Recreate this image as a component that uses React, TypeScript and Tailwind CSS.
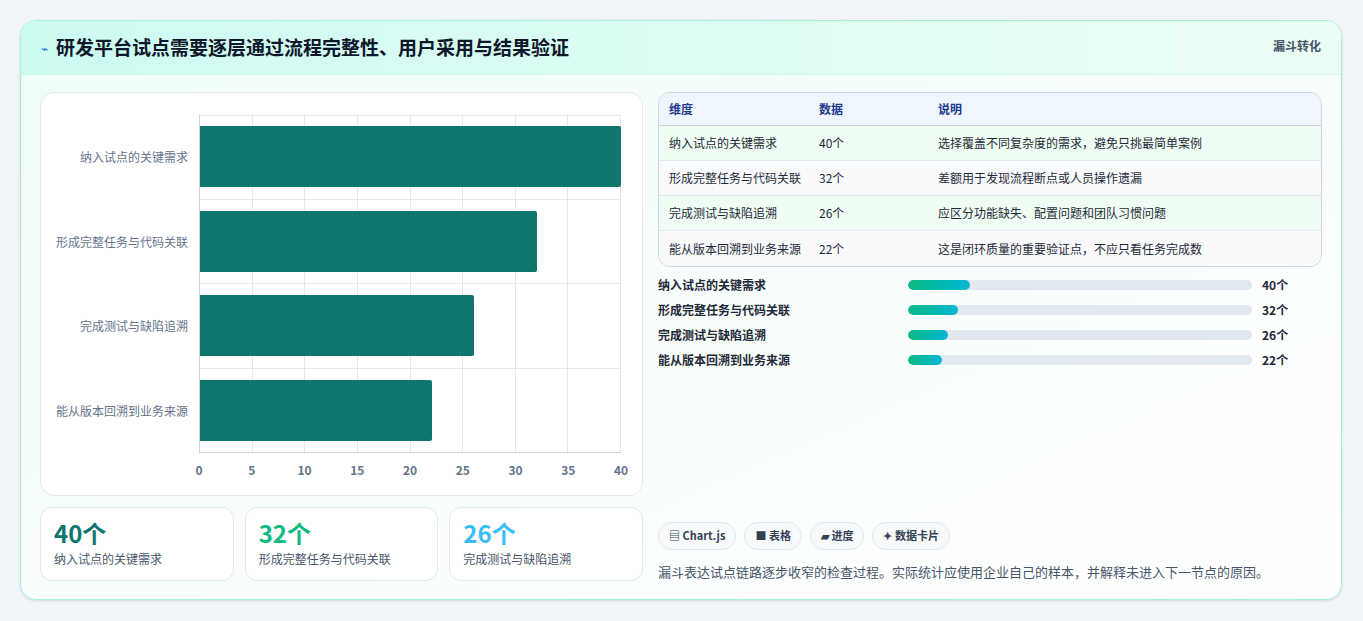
import React from 'react';

const rows = [
  { name: '纳入试点的关键需求', value: 40, note: '选择覆盖不同复杂度的需求，避免只挑最简单案例', pct: 18 },
  { name: '形成完整任务与代码关联', value: 32, note: '差额用于发现流程断点或人员操作遗漏', pct: 14.5 },
  { name: '完成测试与缺陷追溯', value: 26, note: '应区分功能缺失、配置问题和团队习惯问题', pct: 11.7 },
  { name: '能从版本回溯到业务来源', value: 22, note: '这是闭环质量的重要验证点，不应只看任务完成数', pct: 10 },
];

const font = { fontFamily: '"Noto Sans CJK SC", "Noto Sans", sans-serif' };

const BarChart: React.FC = () => {
  const ticks = [0, 5, 10, 15, 20, 25, 30, 35, 40];
  return (
    <div className="flex h-full">
      <div className="w-[158px] flex flex-col pt-[22px] pb-[42px] pr-[11px]">
        {rows.map((r) => (
          <div key={r.name} className="flex-1 flex items-center justify-end text-[12px] text-[#64748b]">
            {r.name}
          </div>
        ))}
      </div>
      <div className="flex-1 flex flex-col pt-[22px] pr-[21px]">
        <div className="relative flex-1 border-l border-b border-[#cbd5e1]">
          <div className="absolute inset-0 flex">
            {ticks.slice(1).map((t) => (
              <div key={t} className="flex-1 border-r border-t border-[#e5e7eb]" />
            ))}
          </div>
          <div className="absolute inset-0 flex flex-col">
            {rows.map((r) => (
              <div key={r.name} className="flex-1 flex items-center border-b border-[#e5e7eb] last:border-b-0">
                <div className="h-[61px] bg-[#0f766e] rounded-r-[2px]" style={{ width: `${(r.value / 40) * 100}%` }} />
              </div>
            ))}
          </div>
        </div>
        <div className="relative h-[42px]">
          {ticks.map((t) => (
            <span
              key={t}
              className="absolute top-[8px] -translate-x-1/2 text-[12px] font-bold text-[#64748b]"
              style={{ left: `${(t / 40) * 100}%` }}
            >
              {t}
            </span>
          ))}
        </div>
      </div>
    </div>
  );
};

const App: React.FC = () => {
  return (
    <div className="w-[1363px] h-[621px] bg-[#f1f5f9] pt-[20px] px-[20px]" style={font}>
      <div className="h-[580px] w-[1322px] rounded-[16px] border border-[#a7f3d0] bg-gradient-to-br from-[#f0fdf9] to-white overflow-hidden shadow-sm flex flex-col">
        <div className="h-[55px] bg-gradient-to-r from-[#ccfbf1] to-[#ecfdf5] border-b border-[#d1fae5] flex items-center justify-between px-[20px]">
          <div className="flex items-center gap-[8px]">
            <span className="text-[#2563eb] text-[12px]">⌁</span>
            <h1 className="text-[19px] font-bold text-[#0f172a]">研发平台试点需要逐层通过流程完整性、用户采用与结果验证</h1>
          </div>
          <span className="self-start mt-[16px] text-[12px] font-bold text-[#475569]">漏斗转化</span>
        </div>
        <div className="flex-1 flex gap-[15px] px-[19px] pt-[17px] pb-[18px]">
          <div className="w-[603px] flex flex-col gap-[11px]">
            <div className="h-[404px] rounded-[14px] border border-[#e2e8f0] bg-white">
              <BarChart />
            </div>
            <div className="flex gap-[11px]">
              {[
                { v: '40个', c: 'text-[#0f766e]', n: rows[0].name },
                { v: '32个', c: 'text-[#10b981]', n: rows[1].name },
                { v: '26个', c: 'text-[#38bdf8]', n: rows[2].name },
              ].map((s) => (
                <div key={s.v} className="flex-1 h-[74px] rounded-[12px] border border-[#e2e8f0] bg-white px-[13px] pt-[10px]">
                  <div className={`text-[24px] font-bold leading-[30px] ${s.c}`}>{s.v}</div>
                  <div className="text-[12px] text-[#475569] mt-[2px]">{s.n}</div>
                </div>
              ))}
            </div>
          </div>
          <div className="flex-1 flex flex-col">
            <div className="rounded-[12px] border border-[#cbd5e1] overflow-hidden bg-white">
              <div className="flex h-[33px] items-center bg-[#eff6ff] border-b border-[#cbd5e1] text-[12px] font-bold text-[#1e3a8a]">
                <span className="w-[160px] pl-[10px]">维度</span>
                <span className="w-[119px]">数据</span>
                <span>说明</span>
              </div>
              {rows.map((r, i) => (
                <div
                  key={r.name}
                  className={`flex h-[35px] items-center text-[12px] text-[#1f2937] ${i < 3 ? 'border-b border-[#e2e8f0]' : ''} ${i % 2 === 0 ? 'bg-[#f0fdf4]' : 'bg-[#f8fafc]'}`}
                >
                  <span className="w-[160px] pl-[10px]">{r.name}</span>
                  <span className="w-[119px]">{r.value}个</span>
                  <span>{r.note}</span>
                </div>
              ))}
            </div>
            <div className="flex flex-col gap-[6px] mt-[8px]">
              {rows.map((r) => (
                <div key={r.name} className="flex items-center h-[19px] text-[12px] font-bold text-[#1f2937]">
                  <span className="w-[250px]">{r.name}</span>
                  <div className="w-[344px] h-[10px] rounded-full bg-[#e2e8f0] overflow-hidden">
                    <div className="h-full rounded-full bg-gradient-to-r from-[#10b981] to-[#06b6d4]" style={{ width: `${r.pct}%` }} />
                  </div>
                  <span className="ml-[10px]">{r.value}个</span>
                </div>
              ))}
            </div>
            <div className="mt-auto flex gap-[8px]">
              {['▤ Chart.js', '■ 表格', '▰ 进度', '✦ 数据卡片'].map((c) => (
                <span key={c} className="h-[28px] px-[10px] rounded-full border border-[#e2e8f0] bg-[#f8fafc] text-[11px] font-bold text-[#334155] flex items-center">
                  {c}
                </span>
              ))}
            </div>
            <p className="mt-[12px] text-[13px] text-[#475569]">漏斗表达试点链路逐步收窄的检查过程。实际统计应使用企业自己的样本，并解释未进入下一节点的原因。</p>
          </div>
        </div>
      </div>
    </div>
  );
};

export default App;
